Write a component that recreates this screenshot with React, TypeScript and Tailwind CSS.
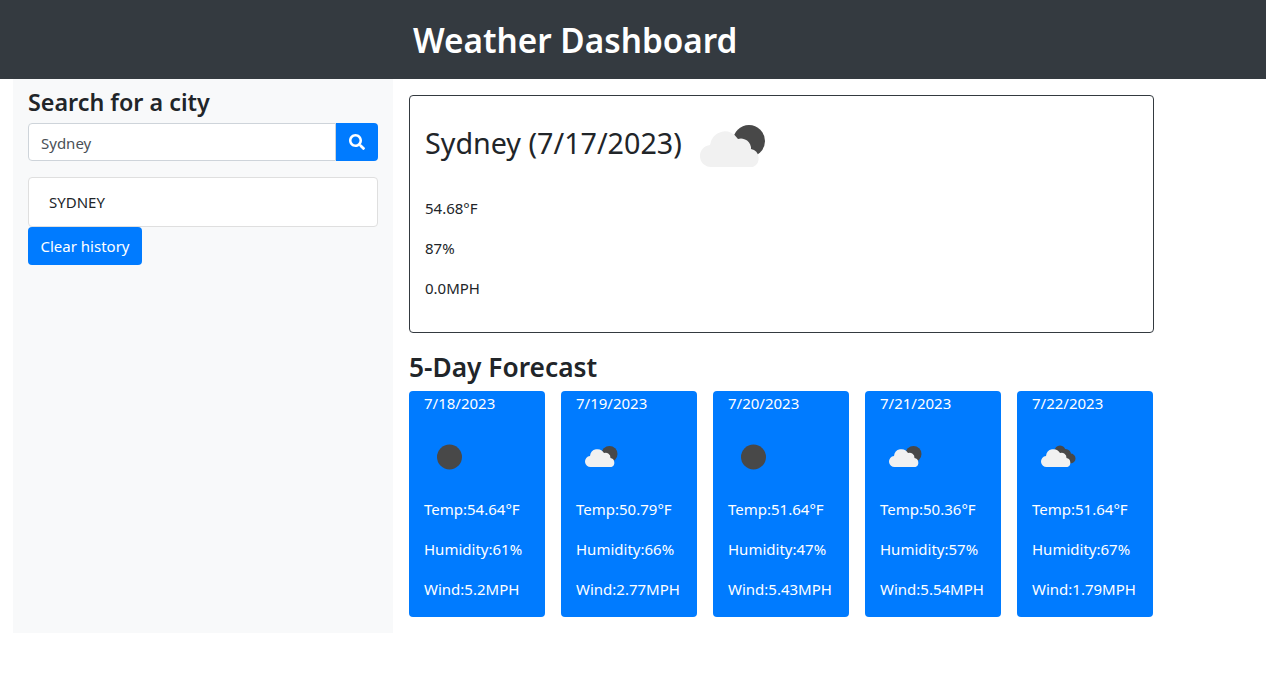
import { FaSearch } from "react-icons/fa";

const font = { fontFamily: '"Noto Sans", sans-serif' };

interface Day {
    date: string;
    icon: "clear" | "few" | "scattered";
    temp: string;
    humidity: string;
    wind: string;
}

const days: Day[] = [
    { date: "7/18/2023", icon: "clear", temp: "54.64", humidity: "61", wind: "5.2" },
    { date: "7/19/2023", icon: "few", temp: "50.79", humidity: "66", wind: "2.77" },
    { date: "7/20/2023", icon: "clear", temp: "51.64", humidity: "47", wind: "5.43" },
    { date: "7/21/2023", icon: "few", temp: "50.36", humidity: "57", wind: "5.54" },
    { date: "7/22/2023", icon: "scattered", temp: "51.64", humidity: "67", wind: "1.79" },
];

const cloud = "M30 70a11 11 0 0 1-2-22a15 15 0 0 1 28-6a10 10 0 0 1 13 10a9.500 9.500 0 0 1 2 18z";

function WeatherIcon({ kind, size }: { kind: Day["icon"]; size: number }) {
    return (
        <svg width={size} height={size} viewBox="0 0 100 100" className="shrink-0">
            {kind === "clear" && <circle cx="51" cy="50" r="25" fill="#484848" />}
            {kind === "few" && (
                <>
                    <circle cx="67" cy="44" r="16" fill="#484848" />
                    <path d={cloud} fill="#f1f1f1" />
                </>
            )}
            {kind === "scattered" && (
                <>
                    <circle cx="56" cy="38" r="11" fill="#484848" />
                    <circle cx="67" cy="45" r="11" fill="#484848" />
                    <circle cx="77" cy="53" r="10" fill="#484848" />
                    <path d={cloud} fill="#f1f1f1" />
                </>
            )}
        </svg>
    );
}

export default function App() {
    return (
        <div style={font} className="min-h-[673px] bg-white text-[15px] leading-6 text-[#212529]">
            <header className="h-[79px] bg-[#343a40] pl-[413px] flex items-center">
                <h1 className="text-[33.3px] leading-[1.2] font-semibold text-white whitespace-nowrap mt-[3px]">Weather Dashboard</h1>
            </header>

            <div className="flex pl-[13px]">
                {/* Sidebar */}
                <aside className="w-[380px] h-[554px] bg-[#f8f9fa] px-[15px]">
                    <h2 className="text-[23.3px] leading-[29px] font-semibold mt-[9px] mb-[6px]">Search for a city</h2>
                    <div className="flex h-[38px]">
                        <div className="flex-1 flex items-center bg-white border border-[#ced4da] rounded-l px-3 text-[#495057] pt-[2px]">
                            Sydney
                        </div>
                        <button className="w-[42px] bg-[#007bff] text-white rounded-r flex items-center justify-center">
                            <FaSearch size={16} />
                        </button>
                    </div>
                    <div className="mt-4 h-[50px] flex items-center bg-white border border-[#dfdfdf] rounded pl-5">
                        SYDNEY
                    </div>
                    <button className="w-[114px] h-[38px] bg-[#007bff] text-white rounded block">Clear history</button>
                </aside>

                {/* Main */}
                <main className="ml-4 w-[745px] pt-[16px]">
                    <section className="h-[238px] border border-[#343a40] rounded px-[15px]">
                        <div className="flex items-center h-[100px]">
                            <h2 className="text-[28.7px] leading-9 w-[257px] mb-[7px] whitespace-nowrap">Sydney (7/17/2023)</h2>
                            <div className="mt-[2px]">
                                <WeatherIcon kind="few" size={100} />
                            </div>
                        </div>
                        <p className="mb-4">54.68°F</p>
                        <p className="mb-4">87%</p>
                        <p>0.0MPH</p>
                    </section>

                    <h3 className="text-[26.3px] leading-8 font-semibold mt-[18px] mb-[8px]">5-Day Forecast</h3>

                    <div className="flex gap-4">
                        {days.map((day) => (
                            <div key={day.date} className="w-[136px] h-[226px] bg-[#007bff] text-white rounded px-[15px]">
                                <p>{day.date}</p>
                                <div className="mt-[17px] mb-[15px] h-[50px]">
                                    <WeatherIcon kind={day.icon} size={50} />
                                </div>
                                <p className="mb-4">Temp:{day.temp}°F</p>
                                <p className="mb-4">Humidity:{day.humidity}%</p>
                                <p className="whitespace-nowrap">Wind:{day.wind}MPH</p>
                            </div>
                        ))}
                    </div>
                </main>
            </div>
        </div>
    );
}
